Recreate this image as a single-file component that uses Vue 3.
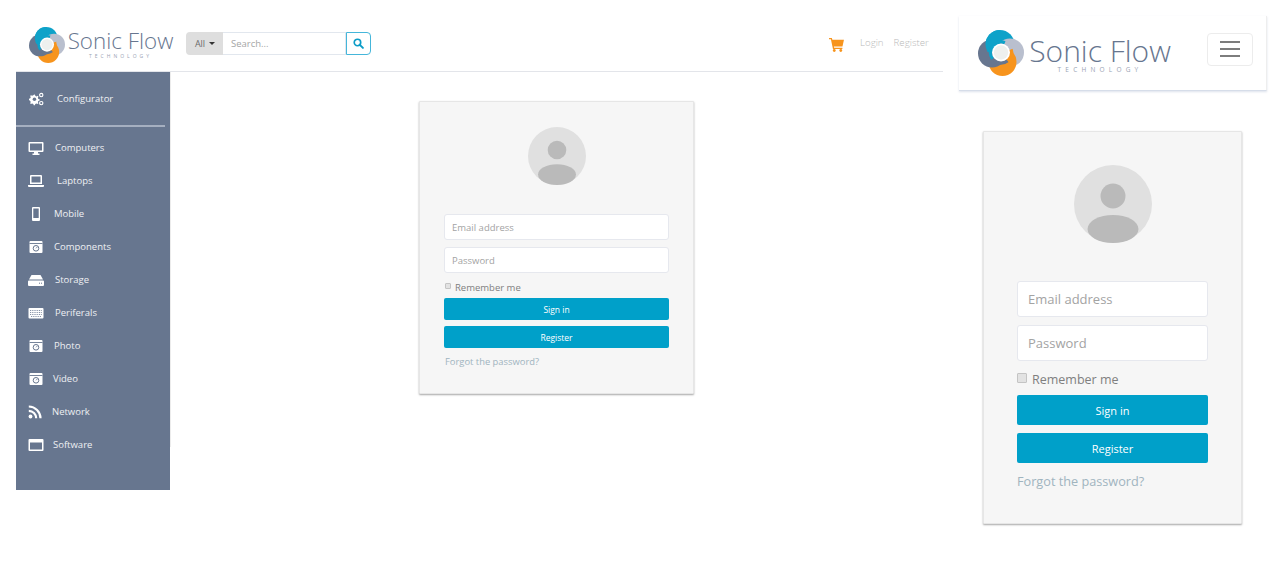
<template>
  <div class="page">
    <!-- desktop mockup -->
    <section class="desk">
      <header class="topbar">
        <svg class="logo" viewBox="0 0 46 46">
          <defs>
            <clipPath id="swirl-clip"><rect x="0" y="0" width="22" height="22" /></clipPath>
            <symbol id="swirl" viewBox="0 0 46 46">
              <circle cx="22" cy="14.5" r="14.5" fill="#0ea2c9" />
              <circle cx="32" cy="22.5" r="14" fill="#b9bfce" />
              <circle cx="24.5" cy="32" r="14" fill="#f7941d" />
              <circle cx="14" cy="23.5" r="14" fill="#67768f" />
              <circle cx="22" cy="14.5" r="14.5" fill="#0ea2c9" clip-path="url(#swirl-clip)" />
              <g fill="none" stroke-width="3.500">
                <path d="M27 12.800A10.500 10.500 0 0 0 14.700 29" stroke="#0ea2c9" />
                <path d="M14.700 29A10.500 10.500 0 0 0 29.600 30.700" stroke="#67768f" />
                <path d="M29.600 30.700A10.500 10.500 0 0 0 33 19.200" stroke="#f7941d" />
                <path d="M33 19.200A10.500 10.500 0 0 0 27 12.800" stroke="#b9bfce" />
              </g>
              <circle cx="23" cy="22.500" r="9" fill="#fff" />
              <circle cx="23" cy="22.500" r="7.200" fill="#eef0ee" />
            </symbol>
          </defs>
          <use href="#swirl" width="46" height="46" />
        </svg>
        <div class="brand">
          <span class="brand-name">Sonic Flow</span>
          <span class="brand-sub">TECHNOLOGY</span>
        </div>
        <div class="search">
          <button class="search-all">All <i class="caret"></i></button>
          <input class="search-input" placeholder="Search..." />
          <button class="search-btn">
            <svg viewBox="0 0 16 16" width="11" height="11">
              <circle cx="6.5" cy="6.5" r="4.7" fill="none" stroke="#0b9cc7" stroke-width="2.4" />
              <path d="M10 10l4.4 4.4" stroke="#0b9cc7" stroke-width="2.8" stroke-linecap="round" />
            </svg>
          </button>
        </div>
        <svg class="cart" viewBox="0 0 16 15">
          <path d="M0 0h3l.6 2H16l-1.6 7H5.2l.3 1.4h8.8v1.4H4.2L2 1.4H0z" fill="#f7941d" />
          <circle cx="5.6" cy="13.4" r="1.5" fill="#f7941d" />
          <circle cx="12.6" cy="13.4" r="1.5" fill="#f7941d" />
        </svg>
        <a class="toplink login">Login</a>
        <a class="toplink">Register</a>
      </header>

      <div class="desk-body">
        <nav class="sidebar">
          <div class="side-item config">
            <svg class="side-icon" viewBox="0 0 18 16">
              <path d="M6.5 3.2l1.2-.3.5 1.5 1.3.6 1.4-.7.9.9-.7 1.4.6 1.3 1.5.5v1.3l-1.5.5-.6 1.3.7 1.4-.9.9-1.4-.7-1.3.6-.5 1.5H6.4l-.5-1.5-1.3-.6-1.4.7-.9-.9.7-1.4-.6-1.3L1 9V7.700l1.4-.5.6-1.300-.7-1.400.9-.9 1.400.7 1.300-.6z" fill="#fff" />
              <circle cx="7.200" cy="8.300" r="2" fill="#67768f" />
              <circle cx="15" cy="3.500" r="1.900" fill="none" stroke="#fff" stroke-width="1.300" />
              <circle cx="15" cy="12.700" r="1.900" fill="none" stroke="#fff" stroke-width="1.300" />
            </svg>
            <span class="side-label" style="margin-left: 13px">Configurator</span>
          </div>
          <hr class="side-rule" />
          <div v-for="item in navItems" :key="item.label" class="side-item">
            <svg class="side-icon" viewBox="0 0 16 14" v-html="item.icon"></svg>
            <span class="side-label" :style="{ marginLeft: item.gap + 'px' }">{{ item.label }}</span>
          </div>
        </nav>
        <main class="desk-main">
          <div class="card">
            <svg class="avatar" viewBox="0 0 78 78">
              <circle cx="39" cy="39" r="39" fill="#e0e0e0" />
              <circle cx="39" cy="31" r="12.500" fill="#bababa" />
              <ellipse cx="39" cy="64" rx="25.500" ry="14" fill="#bababa" />
            </svg>
            <input class="field" placeholder="Email address" />
            <input class="field" placeholder="Password" />
            <label class="remember"><input type="checkbox" />Remember me</label>
            <button class="action">Sign in</button>
            <button class="action">Register</button>
            <a class="forgot">Forgot the password?</a>
          </div>
        </main>
      </div>
    </section>

    <!-- mobile mockup -->
    <section class="phone">
      <header class="phone-bar">
        <svg class="logo" viewBox="0 0 46 46"><use href="#swirl" width="46" height="46" /></svg>
        <div class="brand">
          <span class="brand-name">Sonic Flow</span>
          <span class="brand-sub">TECHNOLOGY</span>
        </div>
        <button class="burger"><i></i><i></i><i></i></button>
      </header>
      <div class="card">
        <svg class="avatar" viewBox="0 0 78 78">
          <circle cx="39" cy="39" r="39" fill="#e0e0e0" />
          <circle cx="39" cy="31" r="12.500" fill="#bababa" />
          <ellipse cx="39" cy="64" rx="25.500" ry="14" fill="#bababa" />
        </svg>
        <input class="field" placeholder="Email address" />
        <input class="field" placeholder="Password" />
        <label class="remember"><input type="checkbox" />Remember me</label>
        <button class="action">Sign in</button>
        <button class="action">Register</button>
        <a class="forgot">Forgot the password?</a>
      </div>
    </section>
  </div>
</template>

<script setup>
const camera = '<path d="M2.500 1h11a1 1 0 0 1 1 1v10a1 1 0 0 1-1 1h-11a1 1 0 0 1-1-1V2a1 1 0 0 1 1-1z" fill="#fff"/><rect x="1.500" y="3" width="13" height=".9" fill="#67768f"/><circle cx="8" cy="8.300" r="2.800" fill="none" stroke="#67768f" stroke-width="1"/><path d="M8 8.300l1.500-1.500" stroke="#67768f" stroke-width=".8"/>'

const navItems = [
  { label: 'Computers', gap: 11, icon: '<path d="M1.500 1h13a1 1 0 0 1 1 1v8a1 1 0 0 1-1 1h-13a1 1 0 0 1-1-1V2a1 1 0 0 1 1-1zm.5 1.500v7h12v-7z" fill="#fff" fill-rule="evenodd"/><path d="M6 11h4v1.500h1.500V14h-7v-1.500H6z" fill="#fff"/>' },
  { label: 'Laptops', gap: 13, icon: '<path d="M3 1h10a1 1 0 0 1 1 1v8H2V2a1 1 0 0 1 1-1zm.5 1.500v6h9v-6z" fill="#fff" fill-rule="evenodd"/><path d="M0 11h16v1a1 1 0 0 1-1 1H1a1 1 0 0 1-1-1z" fill="#fff"/>' },
  { label: 'Mobile', gap: 10, icon: '<path d="M5 0h6a1 1 0 0 1 1 1v12a1 1 0 0 1-1 1H5a1 1 0 0 1-1-1V1a1 1 0 0 1 1-1zm.300 1.500v9.500h5.400V1.500z" fill="#fff" fill-rule="evenodd"/>' },
  { label: 'Components', gap: 10, icon: camera },
  { label: 'Storage', gap: 11, icon: '<path d="M3.500 2h9L15 6.500H1z" fill="#fff"/><path d="M1 7.500h14a1 1 0 0 1 1 1V12a1 1 0 0 1-1 1H1a1 1 0 0 1-1-1V8.500a1 1 0 0 1 1-1z" fill="#fff"/><path d="M11 10.200h1M13 10.200h1" stroke="#67768f" stroke-width="1"/>' },
  { label: 'Periferals', gap: 11, icon: '<rect x=".5" y="2" width="15" height="10.500" rx="1" fill="#fff"/><path d="M2 4.500h12M2 6.500h12M2 8.500h12M3 10.500h10" stroke="#67768f" stroke-width=".8" stroke-dasharray="1 .8"/>' },
  { label: 'Photo', gap: 10, icon: camera },
  { label: 'Video', gap: 9, icon: camera },
  { label: 'Network', gap: 8, icon: '<circle cx="2.500" cy="11.500" r="1.900" fill="#fff"/><path d="M.800 5.800a7.500 7.500 0 0 1 7.400 7.400" fill="none" stroke="#fff" stroke-width="2.200"/><path d="M.800 1.500a11.800 11.800 0 0 1 11.700 11.700" fill="none" stroke="#fff" stroke-width="2.200"/>' },
  { label: 'Software', gap: 9, icon: '<path d="M1.500 1h13a1 1 0 0 1 1 1v10a1 1 0 0 1-1 1h-13a1 1 0 0 1-1-1V2a1 1 0 0 1 1-1zM2 4.500V11.500h12V4.500z" fill="#fff" fill-rule="evenodd"/>' }
]
</script>

<style>
html, body { margin: 0; background: #fff; }
</style>

<style scoped>
.page {
  display: flex; align-items: flex-start; width: 1285px; height: 563px; overflow: hidden;
  font-family: "Open Sans", "Liberation Sans", sans-serif; background: #fff;
}

.desk { width: 927px; margin-left: 16px; flex: none; }
.topbar {
  display: flex; align-items: center; height: 55px; padding-top: 16px; border-bottom: 1px solid #e3e5ea;
  padding-left: 13px; box-sizing: content-box;
}
.topbar .logo { width: 36px; height: 36px; flex: none; margin-top: 2px; }
.brand { display: flex; flex-direction: column; align-items: center; }
.topbar .brand { width: 105px; margin-left: 3px; }
.brand-name { font-weight: 300; font-size: 22.400px; line-height: 25px; color: #67768f; white-space: nowrap; }
.brand-sub { font-size: 5px; line-height: 6px; letter-spacing: 3px; color: #9aa3b4; }

.search { display: flex; height: 23px; width: 185px; margin-left: 13px; }
.search-all {
  width: 37px; border: 0; background: #dedede; border-radius: 4px 0 0 4px; color: #6b6b6b;
  font: 9px "Open Sans", sans-serif; padding: 0 0 0 1px; display: flex; align-items: center; justify-content: center; gap: 4px;
}
.caret { width: 0; height: 0; border: 3px solid transparent; border-top: 3px solid #333; border-bottom: 0; }
.search-input {
  width: 123px; box-sizing: border-box; border: 1px solid #e2e7ee; border-left: 0; padding: 0 8px; outline: 0;
  font: 9.500px "Open Sans", sans-serif;
}
.search-input::placeholder { color: #a5a5a5; }
.search-btn {
  width: 25px; box-sizing: border-box; padding: 0; background: #fff; border: 1px solid #45b6da;
  border-radius: 0 4px 4px 0; display: flex; align-items: center; justify-content: center;
}
.cart { width: 15px; height: 14px; margin-left: 458px; margin-top: 3px; flex: none; }
.toplink { font-size: 9.700px; color: #b9b9b9; font-weight: 300; margin-left: 10px; margin-top: -3px; }
.toplink.login { margin-left: 16px; }

.desk-body { display: flex; align-items: flex-start; }
.sidebar {
  width: 154px; height: 418px; flex: none; background: #67768f; color: #eef0f3; box-sizing: border-box;
  padding-top: 11px;
}
.side-item { display: flex; align-items: center; height: 33px; padding-left: 12px; }
.side-item.config { height: 32px; }
.side-icon { width: 16px; height: 14px; flex: none; }
.side-label { font-size: 9.500px; line-height: 14px; white-space: nowrap; }
.side-rule { border: 0; height: 2px; width: 149px; margin: 10px 0 4px; background: #a5afc0; }

.desk-main { flex: 1; height: 375px; border-left: 1px solid #ececec; padding: 29px 0 0 248px; box-sizing: border-box; }

.card {
  box-sizing: border-box; background: #f6f6f6; border: 1px solid #e6e6e6;
  box-shadow: 0 1px 2px rgba(0, 0, 0, .35); border-radius: 1px; display: flex; flex-direction: column;
}
.desk .card { width: 275px; height: 293px; padding: 25px 24px 0; }
.avatar { display: block; align-self: center; flex: none; }
.desk .avatar { width: 58px; height: 58px; margin-bottom: 29px; }
.field {
  box-sizing: border-box; width: 100%; background: #fff; border: 1px solid #e6e8ee; border-radius: 3px;
  outline: 0; font-family: "Open Sans", sans-serif; flex: none;
}
.field::placeholder { color: #a3a3a3; }
.desk .field { height: 26px; font-size: 9.500px; padding: 0 7px; margin-bottom: 7px; }
.remember { display: flex; align-items: center; color: #7f7f7f; }
.remember input {
  appearance: none; margin: 0; box-sizing: border-box; background: #e2e2e2; border: 1px solid #c4c4c4; border-radius: 1px;
}
.desk .remember { font-size: 9.500px; height: 14px; margin-bottom: 4px; }
.desk .remember input { width: 6px; height: 6px; margin: -2px 4px 0 1px; }
.action {
  border: 0; background: #00a0c9; color: #fff; border-radius: 2px; font-family: "Open Sans", sans-serif; padding: 0; flex: none;
}
.desk .action { height: 22px; font-size: 8.500px; margin-bottom: 6px; font-weight: 500; }
.forgot { color: #a0b4bf; }
.desk .forgot { font-size: 9.400px; margin-top: 1px; padding-left: 1px; line-height: 14px; }

.phone { width: 308px; margin: 16px 0 0 16px; flex: none; }
.phone-bar {
  height: 75px; display: flex; align-items: center; box-sizing: border-box; padding: 0 13px 0 19px;
  border-right: 1px solid #eee; border-bottom: 1px solid #d6dde9; box-shadow: 0 1px 2px rgba(120, 140, 175, .25);
}
.phone-bar .logo { width: 46px; height: 46px; flex: none; }
.phone-bar .brand { width: 140px; margin-left: 6px; }
.phone-bar .brand-name { font-size: 30px; line-height: 33px; }
.phone-bar .brand-sub { font-size: 6.500px; line-height: 7px; letter-spacing: 4.200px; margin-top: -1px; }
.burger {
  margin-left: auto; margin-top: -8px; width: 46px; height: 33px; box-sizing: border-box; background: #fff; border: 1px solid #ececec; border-radius: 4px;
  display: flex; flex-direction: column; align-items: center; justify-content: center; gap: 5px; padding: 0;
}
.burger i { display: block; width: 20px; height: 2px; background: #7d7d7d; }
.phone .card { width: 259px; height: 393px; margin: 40px 0 0 24px; padding: 33px 33px 0; }
.phone .avatar { width: 78px; height: 78px; margin-bottom: 38px; }
.phone .field { height: 36px; font-size: 13px; padding: 0 10px; margin-bottom: 8px; }
.phone .remember { font-size: 12.500px; height: 18px; margin-top: 1px; margin-bottom: 7px; }
.phone .remember input { width: 10px; height: 10px; margin-right: 5px; margin-top: -2px; }
.phone .action { height: 30px; font-size: 11px; margin-bottom: 8px; font-weight: 500; }
.phone .forgot { font-size: 12.700px; margin-top: 1px; line-height: 18px; }
</style>
